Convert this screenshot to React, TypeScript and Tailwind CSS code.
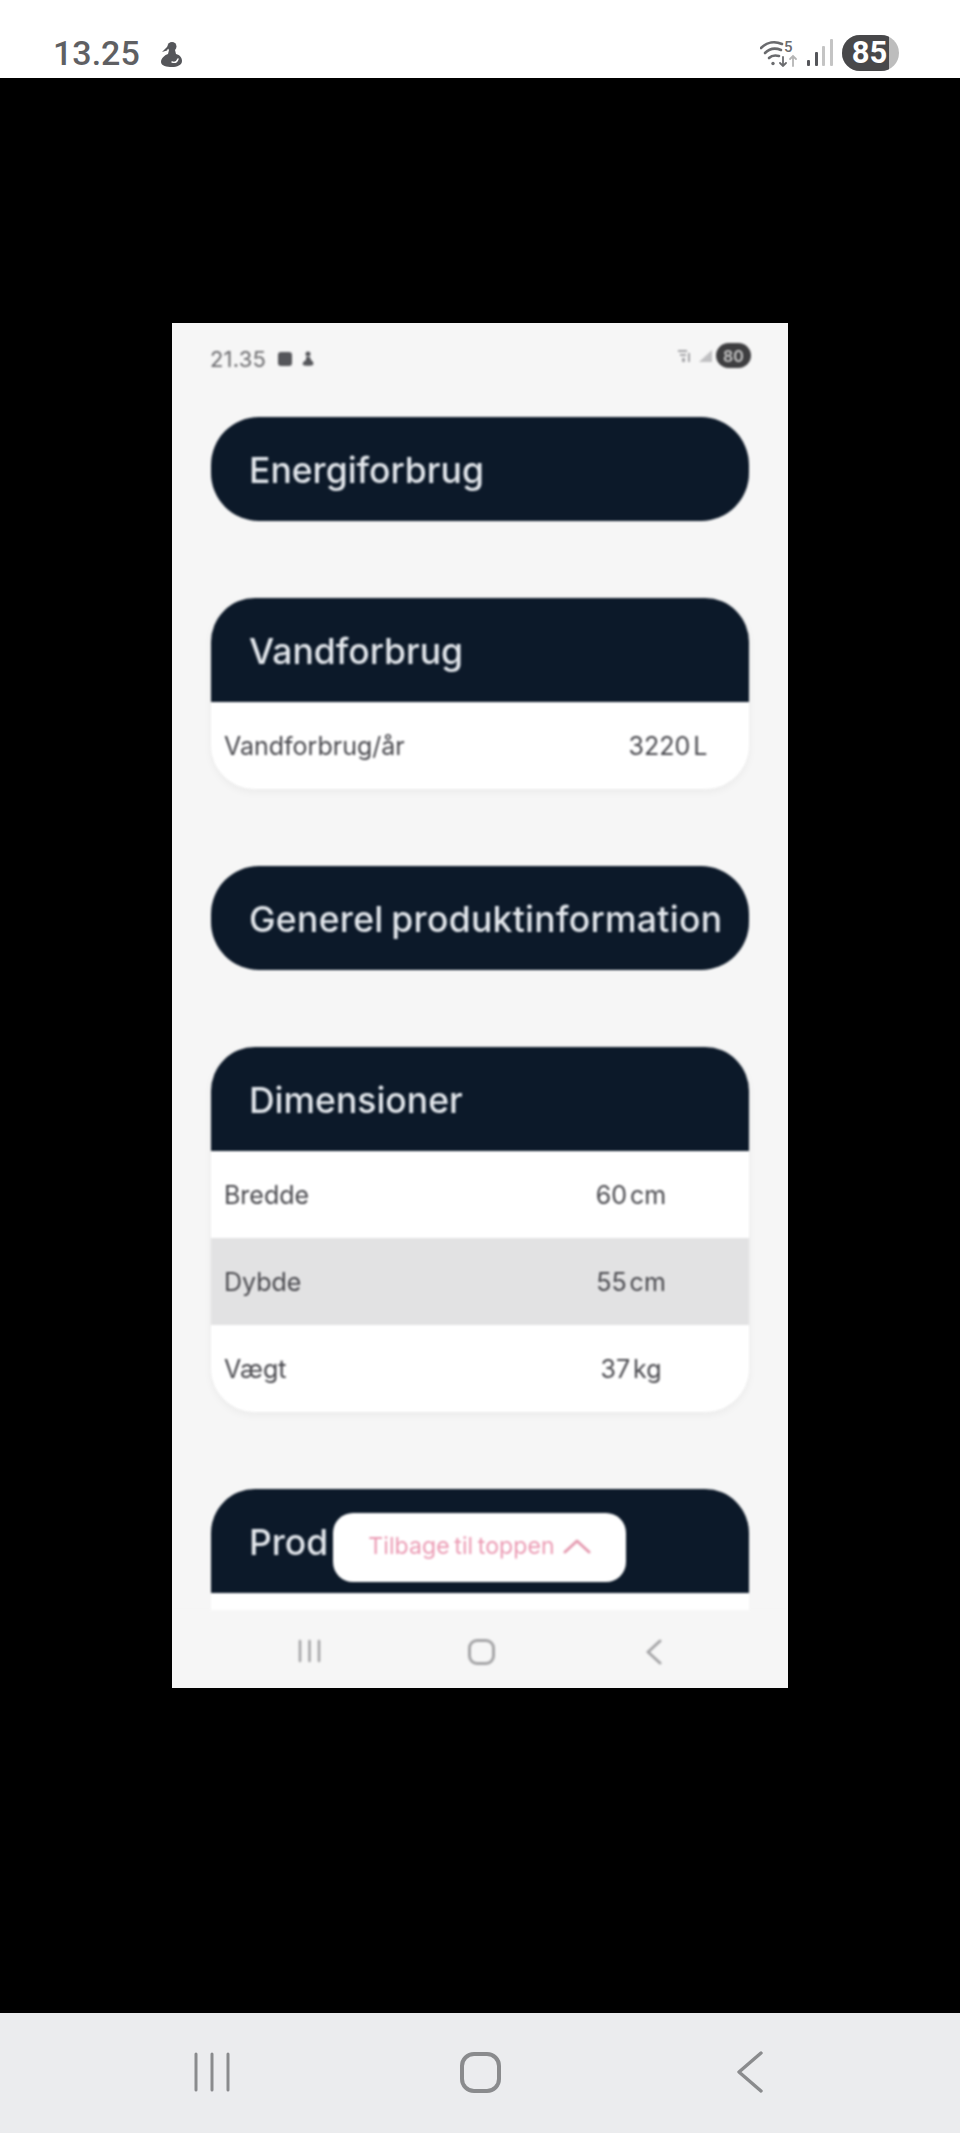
import React from 'react';

const headerClass = 'bg-[#0c1929] h-[104px] flex items-center pl-[38px] pt-[3px] text-[35.5px] font-medium text-[#e3e7ec] whitespace-nowrap';

const Row = ({ label, value, gray, last, narrow }: { label: string; value: string; gray?: boolean; last?: boolean; narrow?: boolean }) => (
  <div className={`flex items-center h-[87px] pl-[13px] pt-[2px] text-[25px] text-[#48484d] ${gray ? 'bg-[#e2e2e3]' : 'bg-white'} ${last ? 'rounded-b-[44px]' : ''}`}>
    <span className="flex-1">{label}</span>
    <span className={`text-center [word-spacing:-4px] ${narrow ? 'w-[162px]' : 'w-[236px]'}`}>{value}</span>
  </div>
);

const CollapsedCard = ({ title, wide }: { title: string; wide?: boolean }) => (
  <div className={`${headerClass} rounded-[48px] ${wide ? 'tracking-[0.3px] [word-spacing:-2px]' : ''}`}>{title}</div>
);

const TableCard = ({ title, children }: { title: string; children: React.ReactNode }) => (
  <div className="rounded-[44px] shadow-[0_3px_8px_rgba(0,0,0,0.05)]">
    <div className={`${headerClass} rounded-t-[44px]`}>{title}</div>
    {children}
  </div>
);

export default function App() {
  return (
    <div className="w-[960px] h-[2133px] flex flex-col bg-black font-['Inter',sans-serif]">
      {/* outer status bar */}
      <div className="h-[78px] bg-white flex items-end pb-[6px] pl-[53px] pr-[61px] text-[#5f6063]">
        <span className="text-[34px] leading-[38px] font-medium font-['Roboto',sans-serif]">13.25</span>
        <svg width="24" height="26" viewBox="0 0 24 26" className="ml-[20px] mb-[5px]" fill="#55565a">
          <circle cx="12" cy="5.500" r="4.500" />
          <path d="M8 5 2 11l5-1.500 1-2z" />
          <path d="M9 9h6l1 4c4 1 6 4 6 7 0 4-5 6-10 6s-11-1-11-5c0-4 4-7 7-8z" />
          <path d="M12 21c3 1 5 0 6-3" fill="none" stroke="#ffffff" strokeWidth="1.4" strokeLinecap="round" />
        </svg>
        <div className="ml-auto flex items-end">
          <svg width="38" height="28" viewBox="0 0 38 28" fill="none" stroke="#6a6b6e" strokeWidth="2.6" className="mb-[5px]" strokeLinecap="round">
            <path d="M1 9c6-6 14-7 21-4" />
            <path d="M5 14c5-5 11-5 16-3" />
            <path d="M9 19c3-3 6-3 10-2" />
            <path d="M13 24.500v0" strokeWidth="3.4" />
            <path d="M23 18v9M20 24l3 3 3-3" strokeWidth="1.8" />
            <path d="M33 27v-10M30 20l3-3 3 3" stroke="#b5b5b5" strokeWidth="1.8" />
            <text x="24" y="13" fontSize="15" fontWeight="500" fill="#6a6b6e" stroke="none" fontFamily="Roboto">5</text>
          </svg>
          <svg width="26" height="28" viewBox="0 0 26 28" className="ml-[9px] mb-[5px]" fill="#55565a">
            <rect x="0" y="21" width="3" height="6" rx="1" />
            <rect x="8" y="13" width="3" height="14" rx="1" />
            <rect x="15" y="7" width="3" height="20" rx="1" fill="#c4c4c4" />
            <rect x="23" y="0" width="3" height="27" rx="1" fill="#c4c4c4" />
          </svg>
          <div className="ml-[9px] mb-[1px] h-[36px] w-[57px] rounded-full overflow-hidden bg-[#bdbdbd]">
            <div className="h-full w-[47px] bg-[#48484a] flex items-center justify-center pl-[8px] text-white text-[31px] font-bold font-['Roboto',sans-serif]">
              85
            </div>
          </div>
        </div>
      </div>

      {/* black area with the screenshot in it */}
      <div className="flex-1 flex justify-center pt-[245px]">
        <div className="w-[616px] h-[1365px] bg-[#f6f6f6] overflow-hidden">
          <div className="relative h-full flex flex-col blur-[1px]">
            <div className="h-[94px] shrink-0 flex items-start pt-[20px] pl-[38px] pr-[37px] text-[22px] text-[#6b6b6e]">
              <span className="tracking-[0.2px]">21.35</span>
              <span className="ml-[12px] mt-[9px] w-[14px] h-[14px] rounded-[3px] bg-[#55565a]" />
              <svg width="14" height="16" viewBox="0 0 14 16" className="ml-[9px] mt-[8px]" fill="#55565a">
                <circle cx="7" cy="3" r="2.500" />
                <path d="M5 6h4l1 3c2 1 3 3 2 5-1 1-9 1-10 0-1-2 1-4 3-5z" />
              </svg>
              <div className="ml-auto flex items-center">
                <svg width="15" height="15" viewBox="0 0 15 15" fill="#a5a5a8">
                  <path d="M1 2h9v2H1zM3 6h6v2H3zM5 10h3v4H5zM11 5h2v9h-2z" />
                </svg>
                <svg width="16" height="15" viewBox="0 0 16 15" fill="#c0c0c2" className="ml-[5px]">
                  <path d="M15 2v12H2z" />
                </svg>
                <div className="ml-[3px] w-[35px] h-[25px] rounded-full bg-[#3e3e40] flex items-center justify-center text-[16px] font-semibold text-[#c8c8c8]">
                  80
                </div>
              </div>
            </div>

            <div className="flex flex-col gap-[77px] px-[39px]">
              <CollapsedCard title="Energiforbrug" />
              <TableCard title="Vandforbrug">
                <Row label="Vandforbrug/år" value="3220 L" last narrow />
              </TableCard>
              <CollapsedCard title="Generel produktinformation" wide />
              <TableCard title="Dimensioner">
                <Row label="Bredde" value="60 cm" />
                <Row label="Dybde" value="55 cm" gray />
                <Row label="Vægt" value="37 kg" last />
              </TableCard>
              <div className="shrink-0">
                <div className={`${headerClass} rounded-t-[44px]`}>Prod</div>
                <div className="h-[18px] bg-white" />
              </div>
            </div>

            {/* back to top button */}
            <div className="absolute left-[161px] top-[1190px] w-[293px] h-[69px] rounded-[20px] bg-white flex items-center justify-center gap-[8px] pb-[3px] text-[23px] text-[#eb9ab3] [word-spacing:-2px]">
              <span className="tracking-[0.1px]">Tilbage til toppen</span>
              <svg width="28" height="16" viewBox="0 0 28 16" fill="none" stroke="#e59ab0" strokeWidth="3" strokeLinecap="round" strokeLinejoin="round">
                <path d="M2 14 14 3l12 11" />
              </svg>
            </div>

            {/* inner nav bar */}
            <div className="absolute left-0 right-0 bottom-0 h-[78px] bg-[#f6f6f6] flex justify-center pt-[29px] pl-[3px]">
              <div className="w-[172px] flex justify-center">
                <svg width="25" height="24" viewBox="0 0 25 24" fill="none" stroke="#a5a5a7" strokeWidth="2.600" strokeLinecap="round">
                  <path d="M3 2v20M12.500 2v20M22 2v20" />
                </svg>
              </div>
              <div className="w-[172px] flex justify-center">
                <div className="w-[27px] h-[26px] rounded-[9px] border-[3px] border-[#a5a5a7]" />
              </div>
              <div className="w-[172px] flex justify-center">
                <svg width="20" height="26" viewBox="0 0 20 26" fill="none" stroke="#a5a5a7" strokeWidth="3" strokeLinecap="round" strokeLinejoin="round">
                  <path d="M16 2 4 13l12 11" />
                </svg>
              </div>
            </div>
          </div>
        </div>
      </div>

      {/* outer nav bar */}
      <div className="h-[120px] bg-[#ebecee] flex items-center pb-[2px]">
        <div className="w-[424px] flex justify-center">
          <svg width="40" height="40" viewBox="0 0 40 40" fill="none" stroke="#8a8b8d" strokeWidth="3" strokeLinecap="round">
            <path d="M4 2v36M20 2v36M36 2v36" />
          </svg>
        </div>
        <div className="w-[112px] flex justify-center">
          <div className="w-[41px] h-[41px] rounded-[14px] border-[4px] border-[#8a8b8d]" />
        </div>
        <div className="flex-1 flex justify-center pl-[4px]">
          <svg width="28" height="42" viewBox="0 0 28 42" fill="none" stroke="#8a8b8d" strokeWidth="3.400" strokeLinecap="round" strokeLinejoin="round">
            <path d="M25 2 3 21l22 19" />
          </svg>
        </div>
      </div>
    </div>
  );
}
